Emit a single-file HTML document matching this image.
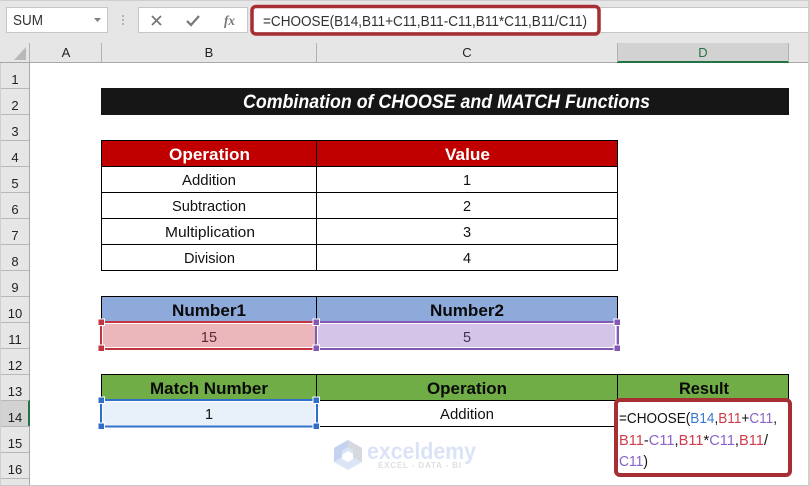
<!DOCTYPE html>
<html><head><meta charset="utf-8"><style>
html,body{margin:0;padding:0;background:#fff;width:810px;height:486px;overflow:hidden}
svg{display:block}
text{font-family:"Liberation Sans",sans-serif}
.h{font-size:13px;fill:#222;text-anchor:middle}
.b{font-size:14.5px;fill:#111;}
.bb{font-size:17px;font-weight:bold;fill:#0a0a0a}
.f{font-size:14.5px}
.red{fill:#d13b4b}.pur{fill:#8a63c6}.blu{fill:#3a78cf}.blk{fill:#111}
</style></head><body>
<svg width="810" height="486" viewBox="0 0 810 486" xmlns="http://www.w3.org/2000/svg">
<rect width="810" height="486" fill="#fff"/>
<!-- ribbon bar -->
<rect width="810" height="63" fill="#e6e6e6"/>
<rect width="810" height="1" fill="#d4cdd0"/>
<rect x="6.500" y="7.500" width="101" height="25" fill="#fff" stroke="#c6c6c6"/>
<text x="13" y="25" font-size="14.500" fill="#333" textLength="30" lengthAdjust="spacingAndGlyphs">SUM</text>
<path d="M94 18h7l-3.500 4z" fill="#808080"/>
<path d="M123 15v2M123 19v2M123 23v2" stroke="#b4b4b4" stroke-width="2"/>
<rect x="138.500" y="7.500" width="109" height="25" fill="#fff" stroke="#c6c6c6"/>
<path d="M152 16l9 9M161 16l-9 9" stroke="#777" stroke-width="1.800" fill="none"/>
<path d="M187 21l4 4 8-9" stroke="#777" stroke-width="2.200" fill="none"/>
<text x="224" y="25" font-size="14" font-style="italic" font-weight="bold" fill="#777" style="font-family:'Liberation Serif',serif" textLength="11" lengthAdjust="spacingAndGlyphs">fx</text>
<rect x="252.500" y="7.500" width="556" height="25" fill="#fff" stroke="#c6c6c6"/>
<text x="263" y="26" font-size="14.500" fill="#333" textLength="324" lengthAdjust="spacingAndGlyphs">=CHOOSE(B14,B11+C11,B11-C11,B11*C11,B11/C11)</text>
<rect x="252" y="6.500" width="347" height="27.500" rx="4" fill="none" stroke="#a52f33" stroke-width="3.500"/>
<!-- column headers -->
<rect x="1" y="43" width="788" height="19" fill="#e6e6e6"/>
<rect x="617" y="43" width="172" height="19" fill="#d2d2d2"/>
<rect x="0" y="62" width="810" height="1" fill="#a8a8a8"/>
<rect x="617" y="61" width="172" height="2" fill="#217346"/>
<path d="M29.500 43v19M101.500 43v19M316.500 43v19M617.500 43v19M788.500 43v19" stroke="#b2b2b2"/>
<path d="M26 47v13H14z" fill="#b9b9b9"/>
<text class="h" x="66" y="57">A</text>
<text class="h" x="209" y="57">B</text>
<text class="h" x="467" y="57">C</text>
<text class="h" x="703" y="57" style="fill:#217346">D</text>
<!-- row headers -->
<rect x="1" y="63" width="28" height="422" fill="#e6e6e6"/>
<rect x="1" y="400" width="28" height="26" fill="#d2d2d2"/>
<rect x="28" y="400" width="2" height="26" fill="#217346"/>
<rect x="29" y="63" width="1" height="337" fill="#a8a8a8"/>
<rect x="29" y="426" width="1" height="59" fill="#a8a8a8"/>
<path d="M1 88.500h28M1 114.500h28M1 140.500h28M1 166.500h28M1 192.500h28M1 218.500h28M1 244.500h28M1 270.500h28M1 296.500h28M1 322.500h28M1 348.500h28M1 374.500h28M1 400.500h28M1 426.500h28M1 452.500h28M1 478.500h28" stroke="#b8b8b8"/>
<text class="h" x="15" y="84">1</text><text class="h" x="15" y="110">2</text><text class="h" x="15" y="136">3</text><text class="h" x="15" y="162">4</text><text class="h" x="15" y="188">5</text><text class="h" x="15" y="214">6</text><text class="h" x="15" y="240">7</text><text class="h" x="15" y="266">8</text><text class="h" x="15" y="292">9</text><text class="h" x="15" y="318">10</text><text class="h" x="15" y="344">11</text><text class="h" x="15" y="370">12</text><text class="h" x="15" y="396">13</text><text class="h" x="15" y="422">14</text><text class="h" x="15" y="448">15</text><text class="h" x="15" y="474">16</text>
<rect x="0" y="63" width="1" height="423" fill="#d4cdd0"/>
<rect x="808" y="0" width="2" height="486" fill="#d4cdd0"/>
<rect x="0" y="485" width="810" height="1" fill="#c8c8c8"/>
<!-- title -->
<rect x="101" y="88" width="688" height="27" fill="#161616"/>
<text x="243" y="108" font-size="19" font-weight="bold" font-style="italic" fill="#fff" textLength="407" lengthAdjust="spacingAndGlyphs">Combination of CHOOSE and MATCH Functions</text>
<!-- table 1 -->
<rect x="101" y="140" width="516" height="26" fill="#c00000"/>
<path d="M101.500 140v131M316.500 140v131M617.500 140v131M101 140.500h517M101 166.500h517M101 192.500h517M101 218.500h517M101 244.500h517M101 270.500h517" stroke="#000" fill="none"/>
<text x="169" y="160" class="bb" style="fill:#fff" textLength="81" lengthAdjust="spacingAndGlyphs">Operation</text>
<text x="445" y="160" class="bb" style="fill:#fff" textLength="45" lengthAdjust="spacingAndGlyphs">Value</text>
<text x="182" y="185" class="b" textLength="54" lengthAdjust="spacingAndGlyphs">Addition</text>
<text x="172" y="211" class="b" textLength="74" lengthAdjust="spacingAndGlyphs">Subtraction</text>
<text x="165" y="237" class="b" textLength="90" lengthAdjust="spacingAndGlyphs">Multiplication</text>
<text x="184" y="263" class="b" textLength="51" lengthAdjust="spacingAndGlyphs">Division</text>
<text x="467" y="185" class="b" text-anchor="middle">1</text>
<text x="467" y="211" class="b" text-anchor="middle">2</text>
<text x="467" y="237" class="b" text-anchor="middle">3</text>
<text x="467" y="263" class="b" text-anchor="middle">4</text>
<!-- table 2 -->
<rect x="101" y="296" width="516" height="26" fill="#8eaadb"/>
<path d="M101.500 296v27M316.500 296v27M617.500 296v27M101 296.500h517" stroke="#000" fill="none"/>
<text x="172" y="316" class="bb" textLength="74" lengthAdjust="spacingAndGlyphs">Number1</text>
<text x="430" y="316" class="bb" textLength="74" lengthAdjust="spacingAndGlyphs">Number2</text>
<rect x="101" y="322" width="215" height="26" fill="#ebb7bb"/>
<rect x="316" y="322" width="301" height="26" fill="#d4c5e8"/>
<rect x="102.500" y="323.500" width="213" height="24" fill="none" stroke="#fff"/>
<rect x="317.500" y="323.500" width="298" height="24" fill="none" stroke="#fff"/>
<rect x="101" y="322" width="215" height="27" fill="none" stroke="#c2343f" stroke-width="2"/>
<rect x="316" y="322" width="302" height="27" fill="none" stroke="#8459b5" stroke-width="2"/>
<g fill="#c2343f" stroke="#fff" stroke-width="1"><rect x="98" y="319" width="6.500" height="6.500"/><rect x="98" y="345" width="6.500" height="6.500"/></g>
<g fill="#8459b5" stroke="#fff" stroke-width="1"><rect x="313" y="319" width="6.500" height="6.500"/><rect x="313" y="345" width="6.500" height="6.500"/><rect x="614" y="319" width="6.500" height="6.500"/><rect x="614" y="345" width="6.500" height="6.500"/></g>
<text x="209" y="342" class="b" text-anchor="middle" style="fill:#5c2a30">15</text>
<text x="467" y="342" class="b" text-anchor="middle" style="fill:#3f2f5c">5</text>
<!-- table 3 -->
<rect x="101" y="374" width="688" height="26" fill="#70ad47"/>
<path d="M101.500 374v27M316.500 374v53M617.500 374v53M788.500 374v27M101 374.500h688M101 400.500h688M316 426.500h302" stroke="#000" fill="none"/>
<text x="150" y="394" class="bb" textLength="118" lengthAdjust="spacingAndGlyphs">Match Number</text>
<text x="427" y="394" class="bb" textLength="80" lengthAdjust="spacingAndGlyphs">Operation</text>
<text x="679" y="394" class="bb" textLength="50" lengthAdjust="spacingAndGlyphs">Result</text>
<rect x="101" y="400" width="215" height="26" fill="#e8f0fa"/>
<rect x="102.500" y="401.500" width="213" height="24" fill="none" stroke="#fff"/>
<rect x="101" y="400" width="216" height="26.500" fill="none" stroke="#2f6fc8" stroke-width="2"/>
<g fill="#2f6fc8" stroke="#fff" stroke-width="1"><rect x="98" y="397" width="6.500" height="6.500"/><rect x="313" y="397" width="6.500" height="6.500"/><rect x="98" y="423" width="6.500" height="6.500"/><rect x="313" y="423" width="6.500" height="6.500"/></g>
<text x="209" y="419" class="b" text-anchor="middle">1</text>
<text x="440" y="419" class="b" textLength="54" lengthAdjust="spacingAndGlyphs">Addition</text>
<!-- watermark -->
<path d="M348 440l14 8v14l-14 8-14-8v-14z" fill="#dbe5f6"/>
<path d="M348 440l14 8v14l-9-5v-7l-5-3z" fill="#d6dae0"/>
<path d="M334 448l14-8v7l-6 4v6l-8 5z" fill="#c4d3ef"/>
<path d="M342 455l6-4 5 3v5l-5 3-6-3z" fill="#fff"/>
<text x="367" y="459" font-size="23" font-weight="bold" fill="#dbe4f6" textLength="109" lengthAdjust="spacingAndGlyphs">exceldemy</text>
<text x="378" y="468" font-size="8" font-weight="bold" fill="#dedede" textLength="83" lengthAdjust="spacing">EXCEL - DATA - BI</text>
<!-- result box -->
<rect x="616" y="400" width="174" height="75" rx="4" fill="#fff" stroke="#a52f33" stroke-width="4"/>
<text class="f" x="619" y="423" textLength="158" lengthAdjust="spacingAndGlyphs"><tspan class="blk">=CHOOSE(</tspan><tspan class="blu">B14</tspan><tspan class="blk">,</tspan><tspan class="red">B11</tspan><tspan class="blk">+</tspan><tspan class="pur">C11</tspan><tspan class="blk">,</tspan></text>
<text class="f" x="619" y="445" textLength="149" lengthAdjust="spacingAndGlyphs"><tspan class="red">B11</tspan><tspan class="blk">-</tspan><tspan class="pur">C11</tspan><tspan class="blk">,</tspan><tspan class="red">B11</tspan><tspan class="blk">*</tspan><tspan class="pur">C11</tspan><tspan class="blk">,</tspan><tspan class="red">B11</tspan><tspan class="blk">/</tspan></text>
<text class="f" x="619" y="466" textLength="29" lengthAdjust="spacingAndGlyphs"><tspan class="pur">C11</tspan><tspan class="blk">)</tspan></text>
</svg>
</body></html>
